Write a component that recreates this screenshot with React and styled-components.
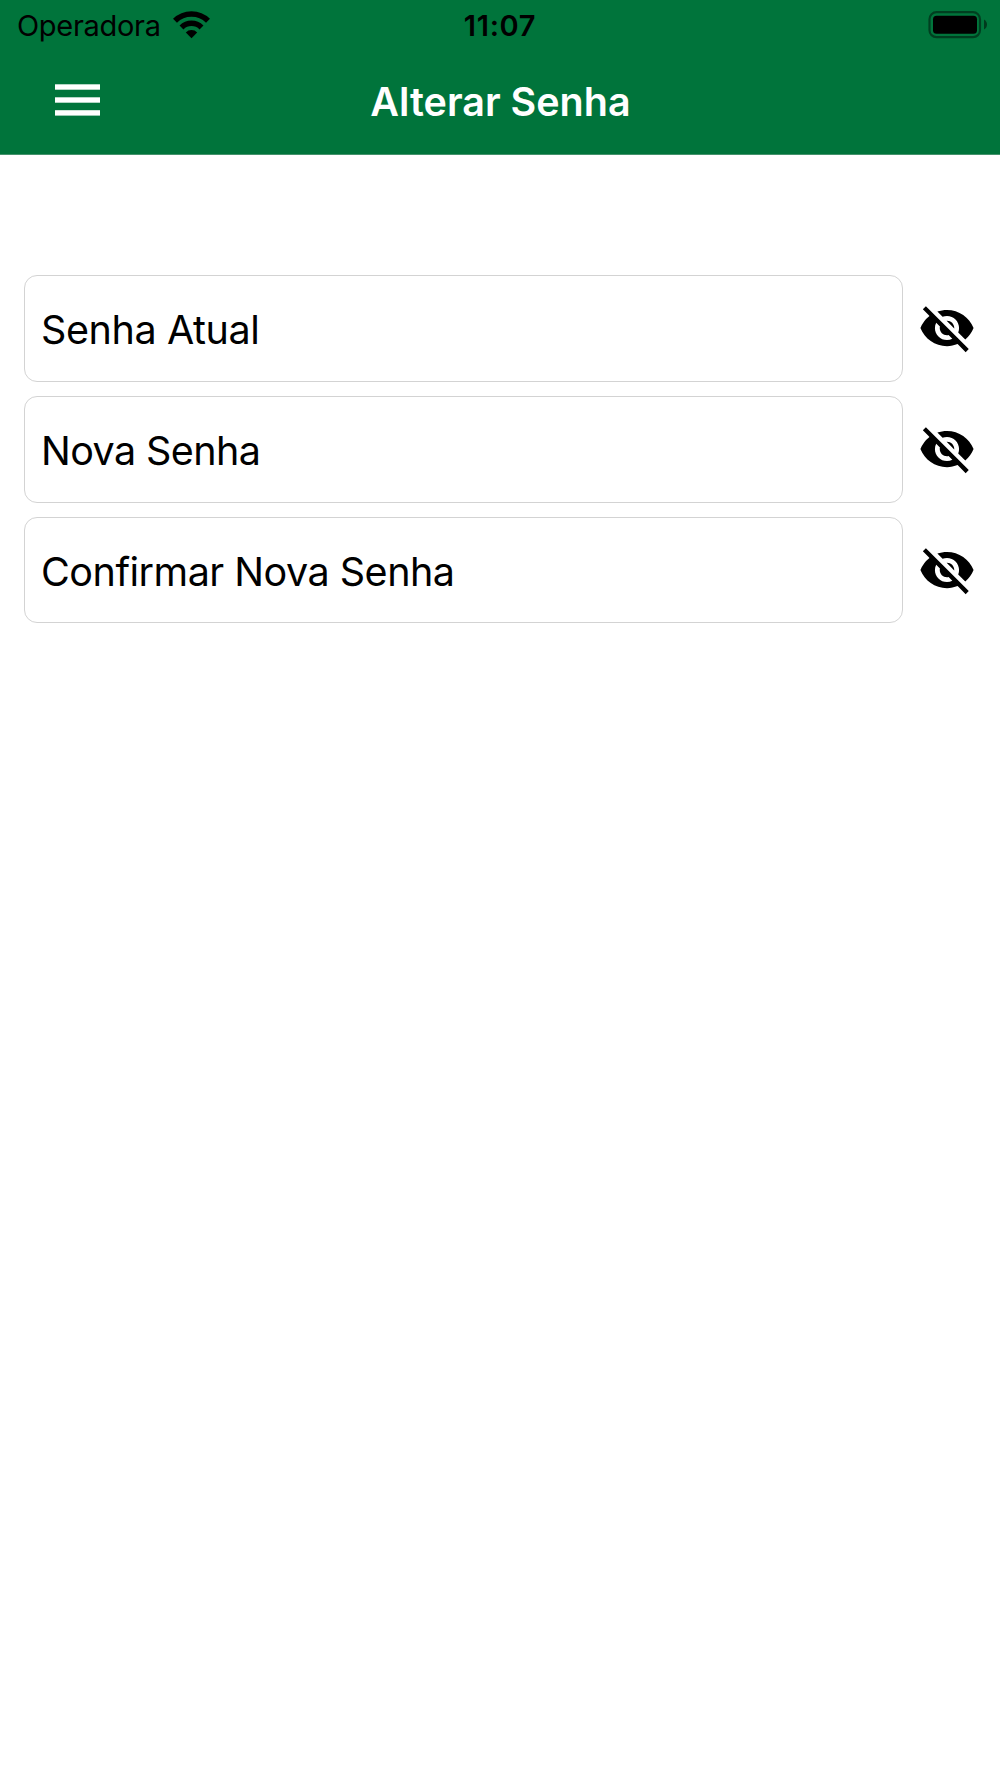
import React, { useState } from 'react';
import styled, { createGlobalStyle } from 'styled-components';
import { MdVisibility, MdVisibilityOff } from 'react-icons/md';

const GlobalStyle = createGlobalStyle`
    * {
        box-sizing: border-box;
    }

    body {
        margin: 0;
        background-color: #fff;
        font-family: Inter, 'Liberation Sans', sans-serif;
    }
`;

const Screen = styled.div`
    min-height: 1778px;
    background-color: #fff;
`;

const Header = styled.header`
    height: 155px;
    background-color: rgb(0,116,59);
    border-bottom: 1px solid rgb(68,146,108);
`;

const StatusBar = styled.div`
    height: 50px;
    padding: 0 13px 0 17px;

    display: grid;
    grid-template-columns: 1fr auto 1fr;
    align-items: center;
`;

const Carrier = styled.div`
    display: flex;
    align-items: center;
    gap: 12px;
`;

const CarrierName = styled.span`
    font-size: 29px;
    line-height: 50px;
    letter-spacing: -0.3px;
`;

const Clock = styled.span`
    padding: 1px 4px 0 0;
    font-size: 29px;
    font-weight: 600;
    line-height: 50px;
    letter-spacing: 0.7px;
`;

const Battery = styled.svg`
    display: block;
    justify-self: end;
    margin-bottom: 1px;
`;

const NavBar = styled.div`
    height: 104px;
    padding: 0 54px 0 55px;

    display: grid;
    grid-template-columns: 1fr auto 1fr;
    align-items: center;
`;

const MenuButton = styled.button`
    width: 45px;
    height: 32px;
    margin-bottom: 4px;
    padding: 0;
    border: 0;
    background: none;
    display: block;
`;

const Title = styled.h1`
    margin: 0;
    color: #fff;
    font-size: 39.5px;
    font-weight: 600;
    line-height: 104px;
    letter-spacing: 0;
`;

const Form = styled.form`
    padding: 120.3px 24px 0;

    display: flex;
    flex-direction: column;
    gap: 14.55px;
`;

const Field = styled.div`
    display: flex;
    align-items: center;
    gap: 14.5px;
`;

const Input = styled.input`
    width: 879px;
    height: 106.35px;
    padding: 3px 16px 0;
    border: 1px solid rgb(211,211,211);
    border-radius: 13px;
    background-color: #fff;
    outline: none;

    color: #000;
    font-family: inherit;
    font-size: 39.5px;
    letter-spacing: ${props => props.$spacing};

    &::placeholder {
        color: #000;
        opacity: 1;
    }
`;

const EyeButton = styled.button`
    width: 58px;
    height: 58px;
    margin-bottom: 0.5px;
    padding: 0;
    border: 0;
    background: none;
    color: #000;
    font-size: 58px;
    flex-shrink: 0;

    svg {
        display: block;
    }
`;

const fields = [
    { name: 'current', label: 'Senha Atual', spacing: '-0.4px' },
    { name: 'next', label: 'Nova Senha', spacing: '-0.6px' },
    { name: 'confirm', label: 'Confirmar Nova Senha', spacing: '-0.5px' },
];

const PasswordField = ({ name, label, spacing }) => {
    const [visible, setVisible] = useState(false);

    return (
        <Field>
            <Input
                name={name}
                type={visible ? 'text' : 'password'}
                placeholder={label}
                $spacing={spacing}
            />
            <EyeButton type="button" onClick={() => setVisible(!visible)}>
                {visible ? <MdVisibility /> : <MdVisibilityOff />}
            </EyeButton>
        </Field>
    );
}

const WifiIcon = () => (
    <svg width="37" height="30" viewBox="0 0 37 30">
        <g fill="none" stroke="#000" strokeWidth="5.6">
            <path d="M2 9.8a23.4 23.4 0 0 1 33 0" />
            <path d="M8.5 16.4a14.2 14.2 0 0 1 20 0" />
        </g>
        <path d="M12.8 21.4a8 8 0 0 1 11.4 0L18.5 27.2z" />
    </svg>
);

const BatteryIcon = () => (
    <Battery width="59" height="28" viewBox="0 0 59 28">
        <rect x="1.5" y="1.2" width="50.5" height="25" rx="7" fill="none" stroke="#000" strokeOpacity="0.45" strokeWidth="2.2" />
        <rect x="5" y="4.7" width="44" height="18" rx="3.5" />
        <path d="M56 8.5c4 2 4 8 0 10z" fillOpacity="0.5" />
    </Battery>
);

const App = () => {
    return (
        <Screen>
            <GlobalStyle />
            <Header>
                <StatusBar>
                    <Carrier>
                        <CarrierName>Operadora</CarrierName>
                        <WifiIcon />
                    </Carrier>
                    <Clock>11:07</Clock>
                    <BatteryIcon />
                </StatusBar>
                <NavBar>
                    <MenuButton type="button">
                        <svg width="45" height="32" viewBox="0 0 45 32" fill="#fff">
                            <rect y="0.3" width="45" height="5.4" />
                            <rect y="13.3" width="45" height="5.4" />
                            <rect y="26.2" width="45" height="5.4" />
                        </svg>
                    </MenuButton>
                    <Title>Alterar Senha</Title>
                </NavBar>
            </Header>
            <Form>
                {fields.map(f => (
                    <PasswordField key={f.name} {...f} />
                ))}
            </Form>
        </Screen>
    );
}

export default App;
